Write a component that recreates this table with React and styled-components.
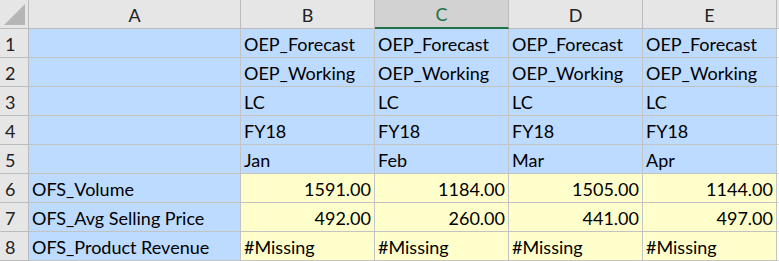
import React from 'react';
import styled, { createGlobalStyle } from 'styled-components';

const GlobalStyle = createGlobalStyle`
  html, body {
    margin: 0;
    padding: 0;
    background: #ffffff;
  }
`;

const Sheet = styled.div`
  display: grid;
  grid-template-columns: 29px 212px 134px 134px 134px 134px 2px;
  grid-auto-rows: 29px;
  font-family: Lato, 'Liberation Sans', sans-serif;
  font-size: 18px;
  color: #000;
`;

const Corner = styled.div`
  position: relative;
  background: #e6e6e6;
  border-right: 1px solid #bcbcbc;
  border-bottom: 1px solid #bcbcbc;

  &::after {
    content: '';
    position: absolute;
    right: 3px;
    bottom: 3px;
    width: 0;
    height: 0;
    border-left: 21px solid transparent;
    border-bottom: 21px solid #b5b5b5;
  }
`;

const ColHead = styled.div`
  display: flex;
  align-items: center;
  justify-content: center;
  background: ${({ $active }) => ($active ? '#d2d2d2' : '#e6e6e6')};
  color: ${({ $active }) => ($active ? '#217346' : '#222')};
  border-right: 1px solid #bcbcbc;
  border-bottom: ${({ $active }) => ($active ? '2px solid #217346' : '1px solid #bcbcbc')};
  box-sizing: border-box;
  padding-top: 1px;
`;

const RowHead = styled.div`
  display: flex;
  align-items: center;
  padding-left: 5px;
  padding-top: 1px;
  background: #e6e6e6;
  color: #222;
  border-right: 1px solid #bcbcbc;
  border-bottom: 1px solid #bcbcbc;
`;

const Cell = styled.div`
  display: flex;
  align-items: center;
  justify-content: ${({ $num }) => ($num ? 'flex-end' : 'flex-start')};
  padding: 1px ${({ $num }) => ($num ? '3px' : '0')} 0 ${({ $num }) => ($num ? '0' : '3px')};
  background: ${({ $kind }) => ($kind === 'data' ? '#ffffcc' : '#bddaff')};
  border-right: 1px solid #c3c3c3;
  border-bottom: 1px solid #c3c3c3;
  white-space: nowrap;
  overflow: hidden;
`;

const Edge = styled.div`
  background: ${({ $head }) => ($head ? '#e6e6e6' : '#ffffff')};
  border-bottom: 1px solid ${({ $head }) => ($head ? '#bcbcbc' : '#d9d9d9')};
`;

const cols = ['A', 'B', 'C', 'D', 'E'];

const headerRows = [
  ['OEP_Forecast', 'OEP_Forecast', 'OEP_Forecast', 'OEP_Forecast'],
  ['OEP_Working', 'OEP_Working', 'OEP_Working', 'OEP_Working'],
  ['LC', 'LC', 'LC', 'LC'],
  ['FY18', 'FY18', 'FY18', 'FY18'],
  ['Jan', 'Feb', 'Mar', 'Apr'],
];

const dataRows = [
  ['OFS_Volume', ['1591.00', '1184.00', '1505.00', '1144.00'], true],
  ['OFS_Avg Selling Price', ['492.00', '260.00', '441.00', '497.00'], true],
  ['OFS_Product Revenue', ['#Missing', '#Missing', '#Missing', '#Missing'], false],
];

export default function App() {
  return (
    <>
      <GlobalStyle />
      <Sheet>
        <Corner />
        {cols.map((c) => (
          <ColHead key={c} $active={c === 'C'}>{c}</ColHead>
        ))}
        <Edge $head />

        {headerRows.map((vals, i) => (
          <React.Fragment key={`h${i}`}>
            <RowHead>{i + 1}</RowHead>
            <Cell $kind="member" />
            {vals.map((v, j) => (
              <Cell key={j} $kind="member">{v}</Cell>
            ))}
            <Edge />
          </React.Fragment>
        ))}

        {dataRows.map(([label, vals, num], i) => (
          <React.Fragment key={`d${i}`}>
            <RowHead>{i + 6}</RowHead>
            <Cell $kind="member">{label}</Cell>
            {vals.map((v, j) => (
              <Cell key={j} $kind="data" $num={num}>{v}</Cell>
            ))}
            <Edge />
          </React.Fragment>
        ))}
      </Sheet>
    </>
  );
}
